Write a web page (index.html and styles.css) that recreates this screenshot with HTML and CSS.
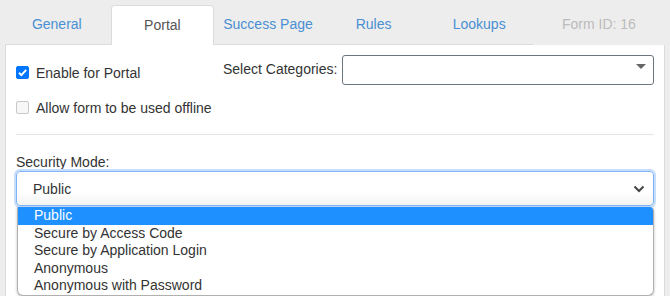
FILE: index.html
```html
<!DOCTYPE html>
<html>
<head>
<meta charset="utf-8">
<link rel="stylesheet" href="styles.css">
</head>
<body>
<div class="page">
  <div class="tabbar">
    <ul class="tabs">
      <li class="tab">General</li>
      <li class="tab active">Portal</li>
      <li class="tab">Success Page</li>
      <li class="tab">Rules</li>
      <li class="tab">Lookups</li>
    </ul>
    <div class="formid">Form ID: 16</div>
  </div>
  <div class="panel">
    <div class="toprow">
      <div class="checks">
        <label class="check"><span class="box checked"><svg width="13" height="13" viewBox="0 0 13 13"><path d="M3 6.8 L5.4 9.1 L10.2 3.9" fill="none" stroke="#fff" stroke-width="2"/></svg></span>Enable for Portal</label>
        <label class="check disabled"><span class="box"></span>Allow form to be used offline</label>
      </div>
      <div class="cats">
        <span class="catlabel">Select Categories:</span>
        <div class="catselect"><svg class="caret" width="10" height="5" viewBox="0 0 10 5"><path d="M0 0 H10 L5 5 Z" fill="#666"/></svg></div>
      </div>
    </div>
    <hr class="sep">
    <div class="seclabel">Security Mode:</div>
    <div class="secwrap">
      <div class="secselect"><span>Public</span><svg width="12" height="8" viewBox="0 0 12 8"><path d="M1.5 1.5 L6 6 L10.5 1.5" fill="none" stroke="#444" stroke-width="2"/></svg></div>
      <ul class="options">
        <li class="opt sel">Public</li>
        <li class="opt">Secure by Access Code</li>
        <li class="opt">Secure by Application Login</li>
        <li class="opt">Anonymous</li>
        <li class="opt">Anonymous with Password</li>
      </ul>
    </div>
  </div>
</div>
</body>
</html>
```
FILE: styles.css
```css
* { box-sizing: border-box; }
html, body { margin: 0; padding: 0; }
body {
  background: #ededed;
  font-family: "Liberation Sans", Arial, sans-serif;
  font-size: 14px;
  color: #333;
  width: 670px;
  height: 296px;
  overflow: hidden;
}
.page { padding: 0 5px; }
.tabbar { display: flex; align-items: flex-end; height: 45px; }
.tabs {
  list-style: none;
  margin: 0;
  padding: 0;
  display: flex;
  width: 528px;
  height: 45px;
  border-bottom: 1px solid #dcdcdc;
  align-items: flex-end;
}
.tab {
  width: 104px;
  margin-right: 2px;
  height: 39px;
  display: flex;
  align-items: center;
  justify-content: center;
  color: #4a8fd2;
  padding-bottom: 1px;
}
.tab.active {
  background: #fff;
  color: #555;
  border: 1px solid #dcdcdc;
  border-bottom: none;
  border-radius: 4px 4px 0 0;
  height: 40px;
  margin-bottom: -1px;
  padding-bottom: 2px;
}
.formid {
  color: #bbb;
  margin-left: 29px;
  height: 39px;
  display: flex;
  align-items: center;
  padding-bottom: 1px;
  margin-bottom: 1px;
}
.panel {
  background: #fff;
  border-left: 1px solid #dcdcdc;
  border-right: 1px solid #dcdcdc;
  height: 260px;
  padding: 10px 10px 0 10px;
}
.toprow { display: flex; }
.checks { width: 207px; display: flex; flex-direction: column; padding-top: 11px; }
.check { display: flex; align-items: center; height: 13px; margin-bottom: 22px; }
.check:last-child { margin-bottom: 0; }
.box {
  width: 13px; height: 13px;
  border: 1px solid #c8c8c8;
  border-radius: 2px;
  background: #f7f7f7;
  margin-right: 7px;
  display: inline-flex;
}
.box.checked { background: #0075ff; border-color: #0075ff; }
.box.checked svg { margin: -1px; }
.cats { display: flex; align-items: flex-start; flex: 1; }
.catlabel { margin-top: 6px; margin-right: 5px; }
.catselect {
  flex: 1;
  height: 30px;
  border: 1px solid #6b7580;
  border-radius: 3px;
  display: flex;
  justify-content: flex-end;
  padding: 8px 7px 0 0;
}
.caret { display: block; }
.sep { border: none; border-top: 1px solid #e5e5e5; margin: 20px 0 0 0; }
.seclabel { margin-top: 19px; line-height: 16px; }
.secwrap { position: relative; margin-top: 1px; }
.secselect {
  height: 35px;
  border: 1px solid #7fb3f5;
  border-radius: 4px;
  box-shadow: 0 0 0 2px #c7defb;
  background: linear-gradient(#fff 60%, #f3f3f3);
  display: flex;
  align-items: center;
  justify-content: space-between;
  padding: 0 8px 0 16px;
  color: #333;
}
.options {
  position: absolute;
  left: 1px;
  right: 0;
  top: 36px;
  list-style: none;
  margin: 0;
  padding: 0;
  background: #fff;
  border: 1px solid #b0b0b0;
  border-top: none;
  border-radius: 0 4px 6px 6px;
  box-shadow: 0 1px 3px rgba(0,0,0,0.25);
  overflow: hidden;
}
.opt { height: 17.6px; line-height: 17px; padding-left: 16px; color: #333; }
.opt.sel { background: #1e90ff; color: #fff; }
```
